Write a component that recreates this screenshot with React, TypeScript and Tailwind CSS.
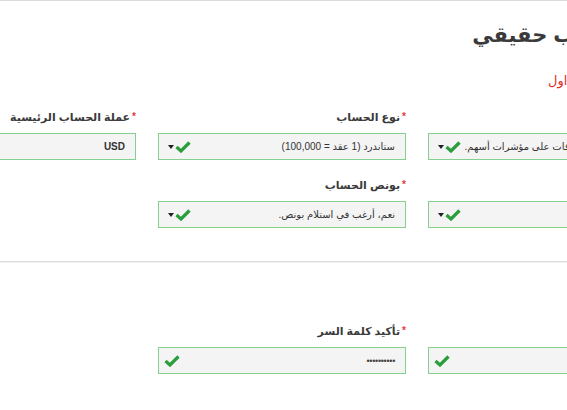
import React from 'react';

const font = { fontFamily: '"Liberation Sans", "DejaVu Sans", sans-serif' };

function Check() {
  return (
    <svg width="16" height="12" viewBox="0 0 16 12" className="shrink-0">
      <path d="M1.5 6 L6 10 L14.5 1.5" fill="none" stroke="#2a9d3c" strokeWidth="3.2" strokeLinejoin="miter" />
    </svg>
  );
}

function Caret() {
  return (
    <svg width="6" height="4" viewBox="0 0 6 4" className="shrink-0">
      <polygon points="0,0 6,0 3,4" fill="#222" />
    </svg>
  );
}

interface FieldProps {
  label?: string;
  value?: React.ReactNode;
  select?: boolean;
  check?: boolean;
  bold?: boolean;
}

function Field({ label, value, select = true, check = true, bold }: FieldProps) {
  return (
    <div className="flex flex-col gap-2">
      <div className="h-4 flex items-center text-[11px] font-bold text-[#3a3a3a] leading-4">
        <span className="text-[#e23b3b] text-[10px] ml-[2px]">*</span>
        {label}
      </div>
      <div className="h-[27px] bg-[#f4f4f4] border border-[#86d08f] flex items-center overflow-hidden">
        <div
          className={`flex-1 min-w-0 overflow-hidden whitespace-nowrap pr-[10px] text-[10px] text-[#333] ${
            bold ? 'font-bold' : ''
          }`}
        >
          {value}
        </div>
        <div className={`flex items-center gap-[1px] shrink-0 ${select ? 'pl-[9px]' : 'pl-[5px]'}`}>
          {check && <Check />}
          {select && <Caret />}
        </div>
      </div>
    </div>
  );
}

export default function App() {
  return (
    <div className="w-[567px] h-[410px] overflow-hidden bg-white border-t border-[#dcdcdc]" style={font}>
      <div dir="rtl" className="w-[788px] ml-[-112px]">
        <div className="pr-[14px] pt-[16px] h-[40px] text-[21px] font-bold text-[#3a3a3a] leading-[36px]">
          فتح حساب حقيقي
        </div>
        <div className="pr-[16px] mt-[30px] text-[13px] text-[#e0302a] leading-5">
          بيانات حساب التداول
        </div>
        <div className="grid grid-cols-3 gap-x-[22px] gap-y-[17px] mt-[18px]">
          <Field label="منصة التداول" value="منصة تداول عقود الفروقات على مؤشرات أسهم." />
          <Field label="نوع الحساب" value="ستاندرد (1 عقد = 100,000)" />
          <Field label="عملة الحساب الرئيسية" value="USD" bold />
          <Field label="الرافعة المالية" value="" />
          <Field label="بونص الحساب" value="نعم، أرغب في استلام بونص." />
          <div />
        </div>
      </div>
      <div className="mt-[33px] border-t border-[#dddddd] border-b border-b-[#f0f0f0]" />
      <div dir="rtl" className="w-[788px] ml-[-112px] mt-[60px]">
        <div className="grid grid-cols-3 gap-x-[22px]">
          <Field label="كلمة السر" value="" select={false} />
          <Field
            label="تأكيد كلمة السر"
            value={<span className="text-[9px] tracking-[-0.3px] text-[#444]">••••••••••</span>}
            select={false}
          />
          <div />
        </div>
      </div>
    </div>
  );
}
